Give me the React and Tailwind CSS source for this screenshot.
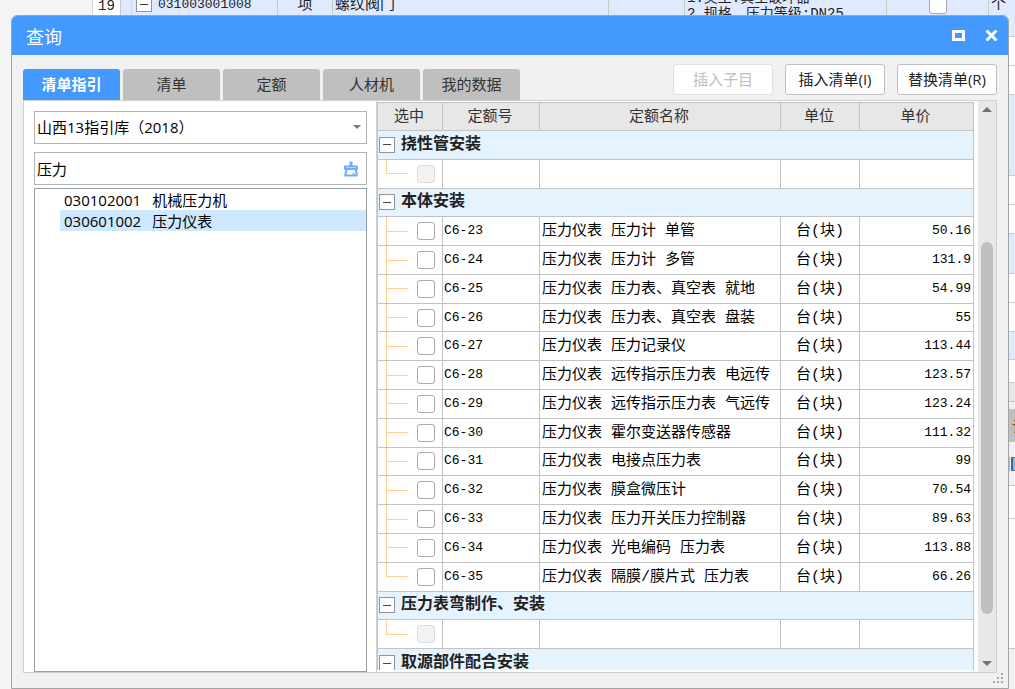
import { Fragment, useState } from 'react'

const SANS = "font-['Open_Sans','Noto_Sans_CJK_SC',sans-serif]"
const MONO = "font-['Liberation_Mono','Noto_Sans_CJK_SC',monospace]"

const TABS = ['清单指引', '清单', '定额', '人材机', '我的数据']

const CODES = [
  { code: '030102001', name: '机械压力机' },
  { code: '030601002', name: '压力仪表' },
]

const GROUPS = [
  { title: '挠性管安装', rows: [] },
  {
    title: '本体安装',
    rows: [
      ['C6-23', '压力仪表 压力计 单管', '50.16'],
      ['C6-24', '压力仪表 压力计 多管', '131.9'],
      ['C6-25', '压力仪表 压力表、真空表 就地', '54.99'],
      ['C6-26', '压力仪表 压力表、真空表 盘装', '55'],
      ['C6-27', '压力仪表 压力记录仪', '113.44'],
      ['C6-28', '压力仪表 远传指示压力表 电远传', '123.57'],
      ['C6-29', '压力仪表 远传指示压力表 气远传', '123.24'],
      ['C6-30', '压力仪表 霍尔变送器传感器', '111.32'],
      ['C6-31', '压力仪表 电接点压力表', '99'],
      ['C6-32', '压力仪表 膜盒微压计', '70.54'],
      ['C6-33', '压力仪表 压力开关压力控制器', '89.63'],
      ['C6-34', '压力仪表 光电编码 压力表', '113.88'],
      ['C6-35', '压力仪表 隔膜/膜片式 压力表', '66.26'],
    ],
  },
  { title: '压力表弯制作、安装', rows: [] },
  { title: '取源部件配合安装', rows: null },
]

function Box({ label, disabled }) {
  return (
    <input
      type="checkbox"
      aria-label={label}
      disabled={disabled}
      className="block size-[18px] appearance-none rounded-[3px] border border-[#a9a9a9] bg-white checked:bg-[#4499ff] disabled:border-[#dcdcdc] disabled:bg-[#f2f2f2]"
    />
  )
}

function Branch({ last }) {
  return (
    <span className="flex w-[22px] flex-col self-stretch">
      <span className="flex-1 border-b border-l border-[#ffd08f]" />
      <span className={last ? 'flex-1' : 'flex-1 border-l border-[#ffd08f]'} />
    </span>
  )
}

function Toggle({ title }) {
  return (
    <button type="button" aria-label={title} className="flex size-4 items-center justify-center border border-[#949494] bg-white">
      <span className="h-px w-2 bg-[#444]" />
    </button>
  )
}

function Backdrop() {
  return (
    <div className={`flex h-full bg-[#f4f4f4] text-[15px] text-[#222] ${MONO}`}>
      <div className="w-[93px] shrink-0 border-r border-[#d4d4d4]" />
      <div className="flex h-4 min-w-0 flex-1 overflow-hidden bg-[#dfeaff] leading-5">
        <div className="w-7 shrink-0 border-r border-[#c8c8c8] bg-white text-center">
          <span className="-mt-1 block text-[14px]">19</span>
        </div>
        <div className="-mt-1 flex w-[157px] shrink-0 items-start gap-0.5 border-r border-[#c8c8c8]">
          <span className="ml-2.5 w-[3px] self-stretch border-l border-[#ffd08f]" />
          <span className="flex size-4 shrink-0 items-center justify-center border border-[#949494] bg-white">
            <span className="h-px w-2 bg-[#444]" />
          </span>
          <span className="-mt-px pl-1 text-[13px]">031003001008</span>
        </div>
        <div className="-mt-1 w-[55px] shrink-0 border-r border-[#c8c8c8] text-center">项</div>
        <div className="-mt-1 w-[276px] shrink-0 border-r border-[#c8c8c8] pl-0.5">螺纹阀门</div>
        <div className="w-[76px] shrink-0 border-r border-[#c8c8c8]" />
        <div className="-mt-2.5 min-w-0 flex-1 border-r border-[#c8c8c8] pl-0.5 text-[14px] leading-4 whitespace-nowrap">
          <div>1.类型:真空破坏器</div>
          <div>2.规格、压力等级:DN25</div>
        </div>
        <div className="flex w-[102px] shrink-0 justify-center border-r border-[#c8c8c8]">
          <span className="-mt-1 size-[18px] rounded-[3px] border border-[#a9a9a9] bg-white" />
        </div>
        <div className="-mt-1 w-[26px] shrink-0 pl-0.5">个</div>
      </div>
    </div>
  )
}

function EdgeStrip() {
  return (
    <div className="flex h-full w-[6px] shrink-0 flex-col overflow-hidden bg-[#f0f0f0] *:shrink-0 *:border-b *:border-[#c8c8c8]">
      <div className="h-[22px] bg-[#dfeaff]" />
      <div className="h-[29px] bg-white" />
      <div className="h-[29px] bg-white" />
      <div className="h-[81px] bg-[#dfeaff]" />
      <div className="h-[29px] bg-white" />
      <div className="h-[29px] bg-white" />
      <div className="h-[40px] bg-[#dfeaff]" />
      <div className="h-[29px] bg-white" />
      <div className="h-[29px] bg-white" />
      <div className="h-[28px] bg-[#dfeaff]" />
      <div className="h-[23px] bg-white" />
      <div className="h-[19px] bg-[#e6e6e6]" />
      <div className="h-[8px] bg-[#f0f0f0]" />
      <div className="h-[32px] bg-[#bfbfbf] pl-[3px] text-[15px] leading-8 text-[#7a5230]">计</div>
      <div className="flex h-[44px] items-center gap-0.5 bg-[#f0f0f0]">
        <span className="h-3.5 w-px bg-[#6fd0f5]" />
        <span className="h-3.5 w-4 border-y border-l-2 border-[#2f6ea5] bg-[#8fb8d8]" />
      </div>
      <div className="h-[33px] bg-white" />
      <div className="h-[130px] bg-white" />
    </div>
  )
}

function Sidebar() {
  const [query, setQuery] = useState('压力')
  const [selected, setSelected] = useState('030601002')

  return (
    <div className="flex w-[353px] shrink-0 flex-col border-r border-[#d0d0d0] bg-white pt-2.5 pr-[9px] pl-2.5">
      <div className="relative">
        <select aria-label="指引库" className="block h-[33px] w-full appearance-none border border-[#b4b4b4] bg-white px-0.5 text-[15px]">
          <option>山西13指引库（2018）</option>
        </select>
        <svg viewBox="0 0 8 4" className="pointer-events-none absolute top-3.5 right-1.5 h-1 w-2" fill="#777">
          <path d="M0 0h8L4 4z" />
        </svg>
      </div>
      <div className="mt-2 flex h-[33px] items-center border border-[#b4b4b4] pr-2">
        <input
          aria-label="搜索"
          value={query}
          onChange={e => setQuery(e.target.value)}
          className="h-full min-w-0 flex-1 px-0.5 text-[15px] outline-none"
        />
        <button type="button" aria-label="清空" onClick={() => setQuery('')}>
          <svg viewBox="0 0 14 16" className="h-4 w-3.5" fill="none" stroke="#6aaeff" strokeWidth="2" strokeLinejoin="round">
            <path d="M7 0.5v5" strokeWidth="3" />
            <path d="M1 8V5.5h12V8zM2.5 8.5 1.2 14.5h11.6l-1-6" />
            <path d="M9.5 14.5v-2.5" strokeWidth="1.5" />
          </svg>
        </button>
      </div>
      <ul className="mt-[3px] flex-1 border border-[#98a0a8]">
        {CODES.map(c => (
          <li key={c.code} className="pl-[25px]">
            <button
              type="button"
              onClick={() => setSelected(c.code)}
              className={`flex h-[21px] w-full items-center gap-[11px] pl-1 text-[15px] leading-5 ${c.code === selected ? 'bg-[#cde8ff]' : ''}`}
            >
              <span>{c.code}</span>
              <span>{c.name}</span>
            </button>
          </li>
        ))}
      </ul>
    </div>
  )
}

function QuotaTable() {
  return (
    <div className={`mt-px mb-0.5 min-w-0 flex-1 overflow-hidden ${MONO}`}>
      <table className="h-[576px] w-full table-fixed border-collapse text-[15px] leading-5 text-black [&_td]:border [&_td]:border-[#c3c3c3] [&_td]:p-0 [&_th]:border [&_th]:border-[#c3c3c3] [&_th]:p-0">
        <colgroup>
          <col className="w-[65px]" />
          <col className="w-[97px]" />
          <col />
          <col className="w-[79px]" />
          <col className="w-[114px]" />
        </colgroup>
        <thead>
          <tr className="h-7 bg-[#e7e7e7] text-[#333]">
            {['选中', '定额号', '定额名称', '单位', '单价'].map(h => (
              <th key={h} className="font-normal">
                <div className="pt-0.5 pr-0.5">{h}</div>
              </th>
            ))}
          </tr>
        </thead>
        <tbody>
          {GROUPS.map(g => (
            <Fragment key={g.title}>
              <tr className="h-7 bg-[#e5f3ff]">
                <td colSpan={5}>
                  <div className="flex items-center gap-1.5 pl-px text-base leading-5 font-bold text-[#222]">
                    <Toggle title={g.title} />
                    {g.title}
                  </div>
                </td>
              </tr>
              {g.rows?.length === 0 && (
                <tr className="h-7">
                  <td className="h-7">
                    <div className="flex h-full items-center gap-[9px] pl-2">
                      <Branch last />
                      <Box label={g.title} disabled />
                    </div>
                  </td>
                  <td /><td /><td /><td />
                </tr>
              )}
              {g.rows?.map(([code, name, price], i) => (
                <tr key={code} className="h-7">
                  <td className="h-7">
                    <div className="flex h-full items-center gap-[9px] pl-2">
                      <Branch last={i === g.rows.length - 1} />
                      <Box label={code} />
                    </div>
                  </td>
                  <td><div className="pl-px text-[13px]">{code}</div></td>
                  <td><div className="overflow-hidden pt-0.5 pl-0.5 whitespace-nowrap">{name}</div></td>
                  <td><div className="pt-0.5 text-center">台(块)</div></td>
                  <td><div className="pr-0.5 text-right text-[13px]">{price}</div></td>
                </tr>
              ))}
            </Fragment>
          ))}
        </tbody>
      </table>
    </div>
  )
}

function ScrollRail() {
  return (
    <div className="ml-1 flex w-[18px] shrink-0 flex-col items-center bg-[#e8e8e8] py-1.5">
      <svg viewBox="0 0 10 5" className="h-[5px] w-2.5" fill="#707078"><path d="M0 5h10L5 0z" /></svg>
      <div className="flex w-3 flex-1 flex-col pt-[130px] pb-[47px]">
        <div className="flex-1 rounded-full bg-[#bfbfbf]" />
      </div>
      <svg viewBox="0 0 10 5" className="h-[5px] w-2.5" fill="#707078"><path d="M0 0h10L5 5z" /></svg>
    </div>
  )
}

function ActionButton({ children, disabled }) {
  return (
    <button
      type="button"
      disabled={disabled}
      className="h-[31px] w-[100px] rounded-[3px] border border-[#c0c0c0] bg-white text-[15px] whitespace-nowrap text-[#222] disabled:border-[#e0e0e0] disabled:text-[#bdbdbd]"
    >
      {children}
    </button>
  )
}

function QueryDialog() {
  const [tab, setTab] = useState(TABS[0])

  return (
    <section className="relative flex h-full min-w-0 flex-1 flex-col overflow-hidden rounded-t-md border border-[#a4a4a4] bg-[#f1f1f1]">
      <header className="flex h-[39px] shrink-0 items-center bg-[#4499ff] pr-2.5 pl-3.5 text-white">
        <h1 className="flex-1 pt-1 text-[18px]">查询</h1>
        <button type="button" aria-label="最大化" className="mr-5">
          <svg viewBox="0 0 13 11" className="h-[11px] w-[13px]" fill="none" stroke="currentColor" strokeWidth="3">
            <path d="M1.5 1.5h10v8h-10z" />
          </svg>
        </button>
        <button type="button" aria-label="关闭">
          <svg viewBox="0 0 13 11" className="h-[11px] w-[13px]" fill="none" stroke="currentColor" strokeWidth="3">
            <path d="M1.5 0.5l10 10M11.5 0.5l-10 10" />
          </svg>
        </button>
      </header>
      <div className="flex h-[45px] shrink-0 items-end justify-between pr-[11px] pl-[11px]">
        <div role="tablist" className="flex gap-[3px]">
          {TABS.map(t => (
            <button
              key={t}
              type="button"
              role="tab"
              aria-selected={t === tab}
              onClick={() => setTab(t)}
              className={`h-[31px] w-[97px] rounded-t-[3px] text-[15px] ${t === tab ? 'bg-[#4499ff] font-bold text-white' : 'bg-[#bfbfbf] text-[#333]'}`}
            >
              {t}
            </button>
          ))}
        </div>
        <div className="mb-[5px] flex gap-3">
          <ActionButton disabled>插入子目</ActionButton>
          <ActionButton>插入清单(I)</ActionButton>
          <ActionButton>替换清单(R)</ActionButton>
        </div>
      </div>
      <div className="mr-[11px] mb-[15px] ml-[11px] flex min-h-0 flex-1 border border-[#d0d0d0] bg-white">
        <Sidebar />
        <QuotaTable />
        <ScrollRail />
      </div>
      <svg viewBox="0 0 11 11" className="absolute right-1 bottom-1 size-[11px]" fill="#aaa">
        <path d="M8 0h2v2H8zM4 4h2v2H4zM8 4h2v2H8zM0 8h2v2H0zM4 8h2v2H4zM8 8h2v2H8z" />
      </svg>
    </section>
  )
}

export default function App() {
  return (
    <main className={`relative h-screen overflow-hidden ${SANS}`}>
      <Backdrop />
      <div className="absolute inset-x-0 top-[15px] bottom-0 flex pl-[11px]">
        <QueryDialog />
        <EdgeStrip />
      </div>
    </main>
  )
}
